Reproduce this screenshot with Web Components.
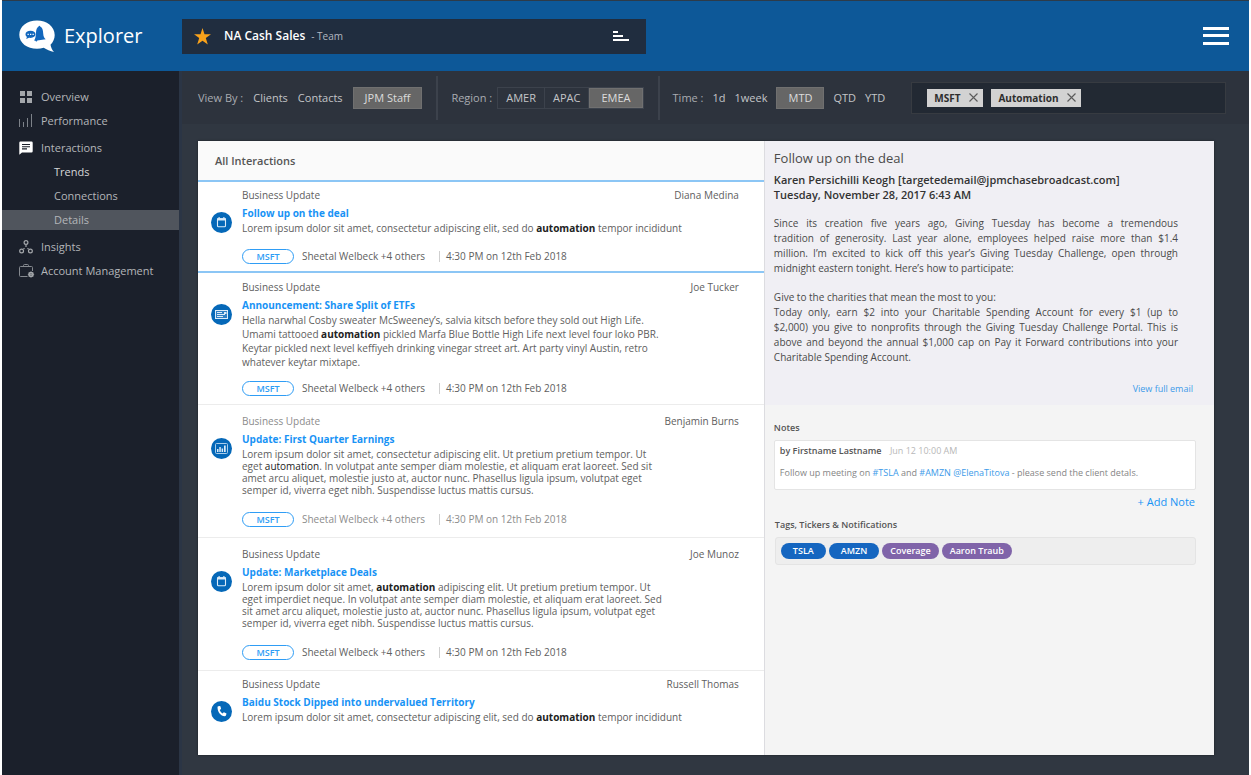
<!DOCTYPE html>
<html lang="en">
<head>
<meta charset="utf-8">
<meta name="viewport" content="width=device-width, initial-scale=1">
<title>Explorer</title>
<style>
	html, body{
		margin: 0;
		padding: 0;
	}
	body{
		background-color: #fff;
		font-family: "Open Sans", "Noto Sans", sans-serif;
		font-size: 11px;
		line-height: 16px;
		color: #555;
	}
	a{
		color: #3d9be9;
		text-decoration: none;
	}
	ex-mail .full{
		display: block;
		text-align-last: justify;
	}
</style>
</head>
<body>

<ex-app>

	<ex-header slot="header" name="Explorer" scope="NA Cash Sales" kind="- Team"></ex-header>

	<ex-nav slot="nav">
		<ex-nav-item icon="grid">Overview</ex-nav-item>
		<ex-nav-item icon="bars">Performance</ex-nav-item>
		<ex-nav-item icon="chat" class="group">Interactions</ex-nav-item>
		<ex-nav-item sub class="bright">Trends</ex-nav-item>
		<ex-nav-item sub>Connections</ex-nav-item>
		<ex-nav-item sub current>Details</ex-nav-item>
		<ex-nav-item icon="nodes" class="group">Insights</ex-nav-item>
		<ex-nav-item icon="case">Account Management</ex-nav-item>
	</ex-nav>

	<ex-filters></ex-filters>

	<ex-board>

		<ex-list slot="list" heading="All Interactions">

			<ex-item icon="calendar" person="Diana Medina" heading="Follow up on the deal" selected>Lorem ipsum dolor sit amet, consectetur adipiscing elit, sed do <b>automation</b> tempor incididunt</ex-item>

			<ex-item icon="mail" person="Joe Tucker" heading="Announcement: Share Split of ETFs" size="long">Hella narwhal Cosby sweater McSweeney’s, salvia kitsch before they sold out High Life.<br>Umami tattooed <b>automation</b> pickled Marfa Blue Bottle High Life next level four loko PBR.<br>Keytar pickled next level keffiyeh drinking vinegar street art. Art party vinyl Austin, retro<br>whatever keytar mixtape.</ex-item>

			<ex-item icon="chart" person="Benjamin Burns" heading="Update: First Quarter Earnings" size="dense" read>Lorem ipsum dolor sit amet, consectetur adipiscing elit. Ut pretium pretium tempor. Ut<br>eget <b>automation</b>. In volutpat ante semper diam molestie, et aliquam erat laoreet. Sed sit<br>amet arcu aliquet, molestie justo at, auctor nunc. Phasellus ligula ipsum, volutpat eget<br>semper id, viverra eget nibh. Suspendisse luctus mattis cursus.</ex-item>

			<ex-item icon="calendar" person="Joe Munoz" heading="Update: Marketplace Deals" size="dense">Lorem ipsum dolor sit amet, <b>automation</b> adipiscing elit. Ut pretium pretium tempor. Ut<br>eget imperdiet neque. In volutpat ante semper diam molestie, et aliquam erat laoreet. Sed<br>sit amet arcu aliquet, molestie justo at, auctor nunc. Phasellus ligula ipsum, volutpat eget<br>semper id, viverra eget nibh. Suspendisse luctus mattis cursus.</ex-item>

			<ex-item icon="phone" person="Russell Thomas" heading="Baidu Stock Dipped into undervalued Territory" short>Lorem ipsum dolor sit amet, consectetur adipiscing elit, sed do <b>automation</b> tempor incididunt</ex-item>

		</ex-list>

		<ex-mail slot="detail" heading="Follow up on the deal" from="Karen Persichilli Keogh [targetedemail@jpmchasebroadcast.com]" date="Tuesday, November 28, 2017 6:43 AM">
			<p><span class="full">Since its creation five years ago, Giving Tuesday has become a tremendous<br>tradition of generosity. Last year alone, employees helped raise more than $1.4<br>million. I’m excited to kick off this year’s Giving Tuesday Challenge, open through</span>midnight eastern tonight. Here’s how to participate:</p>
			<p>Give to the charities that mean the most to you:<span class="full">Today only, earn $2 into your Charitable Spending Account for every $1 (up to<br>$2,000) you give to nonprofits through the Giving Tuesday Challenge Portal. This is<br>above and beyond the annual $1,000 cap on Pay it Forward contributions into your</span>Charitable Spending Account.</p>
		</ex-mail>

		<ex-notes slot="detail" author="by Firstname Lastname" date="Jun 12 10:00 AM">Follow up meeting on <a href="#tsla">#TSLA</a> and <a href="#amzn">#AMZN</a> <a href="#elena">@ElenaTitova</a> - please send the client detals.</ex-notes>

		<ex-tags slot="detail" heading="Tags, Tickers &amp; Notifications">
			<ex-tag>TSLA</ex-tag>
			<ex-tag>AMZN</ex-tag>
			<ex-tag kind="people">Coverage</ex-tag>
			<ex-tag kind="people">Aaron Traub</ex-tag>
		</ex-tags>

	</ex-board>

</ex-app>

<script>

const icons = {

	grid: `<svg width="14" height="14" viewBox="0 0 14 14" fill="#a4a7ab"><path d="M1 1h5v5H1zM8 1h5v5H8zM1 8h5v5H1zM8 8h5v5H8z"/></svg>`,

	bars: `<svg width="14" height="14" viewBox="0 0 14 14" fill="#7d8289"><path d="M0 5h1v8H0zM4 8h1v5H4zM8 4h1v9H8zM12 0h1v13h-1z"/></svg>`,

	chat: `<svg width="14" height="14" viewBox="0 0 14 14"><path d="M1.500.500h11a1.200 1.200 0 0 1 1.200 1.200v8.600a1.200 1.200 0 0 1-1.200 1.200H3L.300 13.800V1.700A1.200 1.200 0 0 1 1.500.500z" fill="#fff"/><path d="M3 3.500h8M3 5.700h8M3 7.900h5" stroke="#1b202b" stroke-width="1.100"/></svg>`,

	nodes: `<svg width="14" height="14" viewBox="0 0 14 14" fill="none" stroke="#a4a7ab" stroke-width="1.200"><circle cx="7" cy="2.500" r="1.900"/><circle cx="2.600" cy="11" r="1.900"/><circle cx="11.400" cy="11" r="1.900"/><path d="M7 4.500v2.500M5.500 8.200L4.500 9M8.500 8.200l1 .8" /></svg>`,

	case: `<svg width="16" height="14" viewBox="0 0 16 14" fill="none" stroke="#85898f"><path d="M8.500 12.500h-7a1 1 0 0 1-1-1V3.500a1 1 0 0 1 1-1h11a1 1 0 0 1 1 1V7"/><path d="M4.500 2.500v-1a1 1 0 0 1 1-1h3a1 1 0 0 1 1 1v1"/><circle cx="12" cy="10.500" r="2" stroke="#a4a7ab" stroke-width="1.500"/><path d="M12 7.300v6.400M8.800 10.500h6.400M9.800 8.300l4.400 4.400M14.200 8.300l-4.400 4.400" stroke="#a4a7ab" stroke-width=".600"/></svg>`,

	calendar: `<svg width="21" height="21" viewBox="0 0 21 21"><circle cx="10.500" cy="10.500" r="10.500" fill="#0568b8"/><rect x="6.500" y="6.700" width="8" height="8" rx="1" fill="none" stroke="#dcebf8" stroke-width="1.100"/><path d="M6 6.300h9v2.300H6zM7.500 5h1.200v2H7.500zM12.300 5h1.200v2h-1.200z" fill="#dcebf8"/></svg>`,

	mail: `<svg width="21" height="21" viewBox="0 0 21 21"><circle cx="10.500" cy="10.500" r="10.500" fill="#0568b8"/><rect x="4.500" y="6.500" width="12" height="8" fill="#2f80c4" stroke="#dcebf8"/><path d="M6 8.500h5M6 10.500h8M6 12.500h6" stroke="#dcebf8"/><path d="M13 8h2.500v2H13z" fill="#dcebf8"/></svg>`,

	chart: `<svg width="21" height="21" viewBox="0 0 21 21"><circle cx="10.500" cy="10.500" r="10.500" fill="#0568b8"/><rect x="4.500" y="5.500" width="12" height="10" rx="1" fill="none" stroke="#a9cdeb"/><path d="M6 11h1.500v3H6zM8.300 9h1.500v5H8.300zM10.600 10.500h1.500V14h-1.500zM13 7.500h1.700V14H13z" fill="#dcebf8"/></svg>`,

	phone: `<svg width="21" height="21" viewBox="0 0 21 21"><circle cx="10.500" cy="10.500" r="10.500" fill="#0568b8"/><path d="M7.300 5.300l1.500-.300c.400 0 .600.200.700.600l.500 1.900c.100.400 0 .600-.300.800l-1 .700c.600 1.600 1.500 2.700 2.900 3.500l.900-.900c.300-.300.500-.300.900-.2l1.700.900c.300.200.400.500.300.800l-.500 1.400c-.200.500-.600.700-1.100.700C9.500 14.800 6.700 11 6.500 6.400c0-.600.200-1 .800-1.100z" fill="#fff"/></svg>`,

	logo: `<svg width="36" height="33" viewBox="0 0 36 33"><path d="M18 .500C27.800.500 35.700 6.500 35.700 15c0 3.800-1.600 7.200-4.200 9.700.500 2.800 1.700 5.300 3.500 7.300-3.800-.700-7.500-2.300-10.300-4.200-2.100.700-4.400 1-6.700 1C8.200 28.800.300 23 .300 14.700.300 6.500 8.200.500 18 .500z" fill="#fff"/><path d="M17 12.500c.200-3 .900-5 2.600-6 0-1 1.600-1 1.600 0 2.200 1 2.800 3.500 3 7 .200 2.800 1 4.500 2.500 5.800l-8.500 1.200c.200 1.300-1.500 1.500-1.800.300l-1.300-.300c1.300-2 1.700-4 1.900-8z" fill="#1267bd"/><path d="M11.500 10.800c2.900 0 5 1.500 5 3.500s-2.100 3.600-5 3.600c-.500 0-1 0-1.500-.1l-2.800 1.200.700-2.100c-.900-.700-1.400-1.600-1.400-2.600 0-2 2.100-3.500 5-3.500z" fill="#1267bd"/><path d="M8.500 14.400h1.300M11 14.400h1.300M13.500 14.400h1.300" stroke="#fff" stroke-width="1.200"/></svg>`,

	star: `<svg width="17" height="17" viewBox="0 0 17 17" fill="#f9a21b"><path d="M8.500 0l2 6.200H17l-5.200 3.900 2 6.500-5.300-3.900-5.300 3.900 2-6.500L0 6.200h6.500z"/></svg>`,

	sort: `<svg width="16" height="12" viewBox="0 0 16 12" fill="#fff"><path d="M0 1h5v2H0zM0 5h10v2H0zM0 9h16v2H0z"/></svg>`,

	menu: `<svg width="26" height="18" viewBox="0 0 26 18" fill="#fff"><path d="M0 0h26v3H0zM0 7h26v3H0zM0 15h26v3H0z"/></svg>`,

	cross: `<svg width="9" height="9" viewBox="0 0 9 9" stroke="#5a5a5a" stroke-width="1.100"><path d="M.500.500l8 8M8.500.500l-8 8"/></svg>`

}

const reset = `
	*{
		box-sizing: border-box;
	}
	svg{
		display: block;
		flex: none;
	}
	h1, h2, h3, p, ul{
		margin: 0;
		padding: 0;
		font-size: inherit;
		font-weight: inherit;
	}
	button, input{
		margin: 0;
		padding: 0;
		border: 0;
		background: none;
		font: inherit;
		color: inherit;
	}
	button{
		cursor: pointer;
	}
	a{
		color: inherit;
		text-decoration: none;
	}
`

class Base extends HTMLElement {

	constructor(){

		super()

		this.shadow = this.attachShadow({mode: 'open'})

	}

	connectedCallback() {

		this.shadow.innerHTML = `<style>${reset}</style>` + this.template()

	}

	attr(name) {

		return this.hasAttribute(name) ? this.getAttribute(name).replace('&', '&amp;') : ''

	}

}

class App extends Base {

	template(){

		return `
			<style>
				:host{
					display: flex;
					flex-direction: column;
					min-height: 100vh;
					box-sizing: border-box;
					padding: 0 2px;
				}
				.body{
					flex: 1;
					display: flex;
				}
				main{
					flex: 1;
					min-width: 0;
					display: flex;
					flex-direction: column;
					background-color: #303741;
					border-left: 3px solid #2b3545;
				}
			</style>
			<slot name="header"></slot>
			<div class="body">
				<slot name="nav"></slot>
				<main><slot></slot></main>
			</div>
		`

	}

}

customElements.define('ex-app', App)

class Header extends Base {

	template(){

		return `
			<style>
				:host{
					display: block;
					background-color: #0d5898;
					border-top: 1px solid #2d3b49;
				}
				header{
					display: flex;
					align-items: center;
					height: 70px;
					padding: 0 20px 0 17px;
				}
				.brand{
					display: flex;
					align-items: center;
					gap: 9px;
					width: 163px;
					color: #fff;
				}
				h1{
					font-size: 20px;
					line-height: 28px;
					font-weight: 500;
				}
				.scope{
					display: flex;
					align-items: center;
					flex: 0 1 464px;
					height: 35px;
					padding: 0 17px 0 12px;
					background-color: #202d3f;
				}
				.scope strong{
					margin: 0 6px 0 13px;
					font-size: 12px;
					font-weight: 600;
					color: #fff;
				}
				.scope span{
					flex: 1;
					font-size: 10px;
					color: #b3b8c0;
				}
				.menu{
					margin-left: auto;
				}
			</style>
			<header>
				<a class="brand" href="#home">${icons.logo}<h1>${this.attr('name')}</h1></a>
				<div class="scope">
					<button aria-label="Favourite">${icons.star}</button>
					<strong>${this.attr('scope')}</strong>
					<span>${this.attr('kind')}</span>
					<button aria-label="Sort">${icons.sort}</button>
				</div>
				<button class="menu" aria-label="Menu">${icons.menu}</button>
			</header>
		`

	}

}

customElements.define('ex-header', Header)

class Nav extends Base {

	template(){

		return `
			<style>
				:host{
					display: block;
					flex: 0 0 177px;
					background-color: #1b202b;
				}
				nav{
					display: flex;
					flex-direction: column;
					gap: 4px;
					padding-top: 16px;
				}
			</style>
			<nav><slot></slot></nav>
		`

	}

}

customElements.define('ex-nav', Nav)

class NavItem extends Base {

	template(){

		return `
			<style>
				:host{
					display: block;
					color: #b4b6b9;
				}
				:host(.group){
					margin-top: 3px;
				}
				:host(.bright){
					color: #d5d6d8;
				}
				a{
					display: grid;
					grid-template-columns: 16px 1fr;
					column-gap: 6px;
					align-items: center;
					height: 20px;
					padding-left: 17px;
				}
				:host([sub]) a{
					display: block;
					padding-left: 52px;
					line-height: 20px;
				}
				:host([current]) a{
					background-color: #50555d;
				}
			</style>
			<a href="#"${this.hasAttribute('current') ? ' aria-current="page"' : ''}>${icons[this.attr('icon')] || ''}<slot></slot></a>
		`

	}

}

customElements.define('ex-nav-item', NavItem)

class Chip extends Base {

	template(){

		return `
			<style>
				:host{
					display: flex;
					align-items: center;
					gap: 9px;
					height: 18px;
					box-sizing: border-box;
					padding: 0 5px 0 7px;
					background-color: #d2d2d2;
					color: #2e2e2e;
					font-size: 10px;
					font-weight: 700;
				}
			</style>
			<slot></slot>
			<button aria-label="Remove">${icons.cross}</button>
		`

	}

}

customElements.define('ex-chip', Chip)

class Filters extends Base {

	template(){

		return `
			<style>
				:host{
					display: flex;
					align-items: center;
					height: 53px;
					box-sizing: border-box;
					padding: 0 23px 0 16px;
					background-color: #2d333d;
					color: #c3c5c8;
				}
				.set{
					display: flex;
					align-items: center;
					gap: 10px;
					height: 44px;
					padding-right: 14px;
					margin-right: 13px;
					border-right: 2px solid #3c424c;
					white-space: nowrap;
				}
				.set span{
					color: #a9acb1;
				}
				.set button[aria-pressed="true"]{
					height: 22px;
					padding: 0 11px;
					background-color: #666;
					border: 1px solid #707070;
					color: #dcdcdc;
				}
				.region{
					gap: 5px;
				}
				.time{
					gap: 9px;
					border: 0;
					padding: 0;
				}
				.switch{
					display: flex;
					border: 1px solid #3c424c;
				}
				.switch button{
					height: 20px;
					padding: 0 8px;
					border-right: 1px solid #3c424c;
				}
				.switch button[aria-pressed="true"]{
					height: 20px;
				}
				.search{
					flex: 1;
					display: flex;
					align-items: center;
					gap: 8px;
					min-width: 0;
					height: 32px;
					margin-left: 13px;
					padding: 0 15px;
					background-color: #222933;
					border: 1px solid #373b41;
				}
				.search input{
					flex: 1;
					min-width: 0;
					outline: 0;
				}
			</style>
			<div class="set">
				<span>View By :</span>
				<button>Clients</button>
				<button>Contacts</button>
				<button aria-pressed="true">JPM Staff</button>
			</div>
			<div class="set region">
				<span>Region :</span>
				<div class="switch">
					<button>AMER</button>
					<button>APAC</button>
					<button aria-pressed="true">EMEA</button>
				</div>
			</div>
			<div class="set time">
				<span>Time :</span>
				<button>1d</button>
				<button>1week</button>
				<button aria-pressed="true">MTD</button>
				<button>QTD</button>
				<button>YTD</button>
			</div>
			<div class="search">
				<ex-chip>MSFT</ex-chip>
				<ex-chip>Automation</ex-chip>
				<input type="text" aria-label="Search">
			</div>
		`

	}

}

customElements.define('ex-filters', Filters)

class Board extends Base {

	template(){

		return `
			<style>
				:host{
					flex: 1;
					display: grid;
					grid-template-columns: 44fr 35fr;
					margin: 17px 35px 20px 16px;
					background-color: #fff;
					box-shadow: 0 0 2px rgba(0, 0, 0, .5);
				}
				.detail{
					background-color: #f4f4f4;
					border-left: 1px solid #dcdce0;
				}
			</style>
			<slot name="list"></slot>
			<div class="detail"><slot name="detail"></slot></div>
		`

	}

}

customElements.define('ex-board', Board)

class List extends Base {

	template(){

		return `
			<style>
				:host{
					display: block;
				}
				h2{
					height: 39px;
					padding-left: 17px;
					line-height: 39px;
					font-size: 11px;
					font-weight: 600;
					background-color: #fafafa;
				}
			</style>
			<h2>${this.attr('heading')}</h2>
			<slot></slot>
		`

	}

}

customElements.define('ex-list', List)

class Item extends Base {

	template(){

		let meta = this.hasAttribute('short') ? '' : `
			<div class="meta">
				<a class="pill" href="#msft">MSFT</a>
				<span class="who">Sheetal Welbeck +4 others</span>
				<time>4:30 PM on 12th Feb 2018</time>
			</div>
		`

		return `
			<style>
				:host{
					display: grid;
					grid-template-columns: 21px 1fr;
					column-gap: 10px;
					padding: 6px 25px 7px 13px;
					border-bottom: 1px solid #ececec;
					font-size: 10px;
					font-weight: 500;
					color: #606060;
				}
				:host([selected]){
					padding-top: 5px;
					border-top: 2px solid #8cc6f5;
					border-bottom: 2px solid #8cc6f5;
				}
				:host([size="long"]){
					padding-bottom: 8px;
				}
				:host([size="dense"]){
					padding: 8px 25px 10px 13px;
				}
				:host([short]){
					padding-top: 5px;
					border-bottom: 0;
				}
				svg{
					margin-top: 25px;
				}
				.top{
					display: flex;
					justify-content: space-between;
				}
				:host([read]) .kind, :host([read]) .meta{
					color: #8c8c8c;
					font-weight: 400;
				}
				h3{
					margin-top: 2px;
					color: #1893f5;
					font-weight: 700;
				}
				p{
					line-height: 14px;
					white-space: nowrap;
				}
				:host([size="dense"]) p{
					padding-top: 1px;
					line-height: 12px;
				}
				::slotted(b){
					color: #222;
					font-weight: 700;
				}
				:host([read]) ::slotted(b){
					font-weight: 500;
				}
				.meta{
					display: flex;
					align-items: center;
					margin-top: 13px;
				}
				:host([size="long"]) .meta{
					margin-top: 11px;
				}
				:host([size="dense"]) .meta{
					margin-top: 15px;
				}
				.pill{
					width: 52px;
					height: 15px;
					border: 1px solid #2f9df5;
					border-radius: 8px;
					color: #2f9df5;
					font-size: 9px;
					line-height: 13px;
					font-weight: 600;
					text-align: center;
				}
				.who{
					width: 137px;
					margin-left: 8px;
				}
				time{
					display: flex;
					align-items: center;
					gap: 6px;
				}
				time::before{
					content: "";
					height: 11px;
					border-left: 1px solid #cfcfcf;
				}
			</style>
			${icons[this.attr('icon')]}
			<article>
				<div class="top"><span class="kind">Business Update</span><span>${this.attr('person')}</span></div>
				<h3><a href="#item">${this.attr('heading')}</a></h3>
				<p><slot></slot></p>
				${meta}
			</article>
		`

	}

}

customElements.define('ex-item', Item)

class Mail extends Base {

	template(){

		return `
			<style>
				:host{
					display: block;
					padding: 9px 21px 9px 9px;
					background-color: #f0eff4;
					color: #4a4a4a;
					font-size: 10px;
					font-weight: 500;
					line-height: 15px;
				}
				h2{
					font-size: 13px;
					line-height: 16px;
					font-weight: 400;
				}
				.from{
					margin-top: 6px;
					color: #333;
					font-size: 11px;
					font-weight: 600;
				}
				::slotted(p){
					margin: 14px 15px 0 0;
				}
				footer{
					margin-top: 16px;
					text-align: right;
					font-size: 9px;
					font-weight: 400;
					color: #3d9be9;
				}
			</style>
			<h2>${this.attr('heading')}</h2>
			<p class="from">${this.attr('from')}<br>${this.attr('date')}</p>
			<slot></slot>
			<footer><a href="#email">View full email</a></footer>
		`

	}

}

customElements.define('ex-mail', Mail)

class Notes extends Base {

	template(){

		return `
			<style>
				:host{
					display: block;
					padding: 16px 18px 0 9px;
				}
				h3{
					font-size: 9px;
					line-height: 14px;
					font-weight: 600;
				}
				.note{
					margin-top: 5px;
					padding: 3px 5px 9px;
					height: 50px;
					background-color: #fff;
					border: 1px solid #e4e4e4;
					border-radius: 2px;
					font-size: 9px;
					line-height: 14px;
				}
				strong{
					margin-right: 6px;
					font-weight: 600;
				}
				time{
					color: #b8b8b8;
				}
				p{
					margin-top: 8px;
					color: #858585;
				}
				.add{
					display: block;
					margin: 4px 1px 0 auto;
					color: #1893f5;
				}
			</style>
			<h3>Notes</h3>
			<div class="note">
				<strong>${this.attr('author')}</strong>
				<time>${this.attr('date')}</time>
				<p><slot></slot></p>
			</div>
			<button class="add">+ Add Note</button>
		`

	}

}

customElements.define('ex-notes', Notes)

class Tags extends Base {

	template(){

		return `
			<style>
				:host{
					display: block;
					padding: 8px 18px 0 10px;
				}
				h3{
					font-size: 9px;
					line-height: 14px;
					font-weight: 600;
				}
				div{
					display: flex;
					gap: 3px;
					margin-top: 5px;
					padding: 5px;
					background-color: #eee;
					border: 1px solid #e4e4e4;
					border-radius: 3px;
				}
			</style>
			<h3>${this.attr('heading')}</h3>
			<div><slot></slot></div>
		`

	}

}

customElements.define('ex-tags', Tags)

class Tag extends Base {

	template(){

		return `
			<style>
				:host{
					display: block;
					padding: 0 12px;
					background-color: #1566c0;
					border-radius: 8px;
					color: #fff;
					font-size: 9px;
					line-height: 16px;
					font-weight: 600;
				}
				:host([kind="people"]){
					padding: 0 8px;
					background-color: #8064a9;
				}
			</style>
			<slot></slot>
		`

	}

}

customElements.define('ex-tag', Tag)

</script>
</body>
</html>
